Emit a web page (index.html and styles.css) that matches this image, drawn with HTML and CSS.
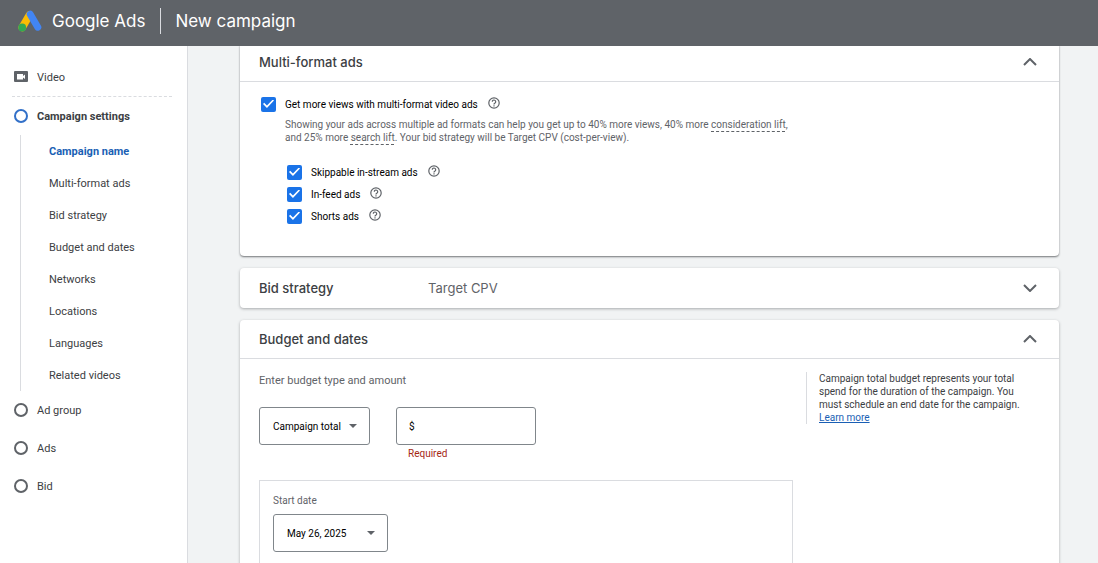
FILE: index.html
```html
<!DOCTYPE html>
<html lang="en">
<head>
    <meta charset="UTF-8">
    <meta name="viewport" content="width=device-width, initial-scale=1.0">
    <title>New campaign - Google Ads</title>
    <link rel="stylesheet" href="styles.css">
</head>
<body>
    <header class="topbar">
        <svg class="logo" viewBox="0 0 24 22" aria-hidden="true">
            <path d="M11.500 5 4.200 17.500" stroke="#fbbc04" stroke-width="7.500" stroke-linecap="round"/>
            <path d="M12.200 4.200 19.800 17.200" stroke="#4285f4" stroke-width="7" stroke-linecap="round"/>
            <circle cx="4.200" cy="17.500" r="3.900" fill="#34a853"/>
        </svg>
        <span class="brand">Google Ads</span>
        <h1 class="page-title">New campaign</h1>
    </header>

    <div class="layout">
        <nav class="sidebar">
            <a href="#" class="step step-type">
                <svg class="step-icon" viewBox="0 0 14 12" aria-hidden="true">
                    <rect width="14" height="11" rx="1" fill="#5f6368"/>
                    <path d="M3 3h6v2l2-1.500v4.500l-2-1.500v2H3z" fill="#fff"/>
                </svg>
                Video
            </a>
            <a href="#" class="step current"><span class="dot"></span>Campaign settings</a>
            <ul class="substeps">
                <li><a href="#" class="active">Campaign name</a></li>
                <li><a href="#">Multi-format ads</a></li>
                <li><a href="#">Bid strategy</a></li>
                <li><a href="#">Budget and dates</a></li>
                <li><a href="#">Networks</a></li>
                <li><a href="#">Locations</a></li>
                <li><a href="#">Languages</a></li>
                <li><a href="#">Related videos</a></li>
            </ul>
            <a href="#" class="step"><span class="dot"></span>Ad group</a>
            <a href="#" class="step"><span class="dot"></span>Ads</a>
            <a href="#" class="step"><span class="dot"></span>Bid</a>
        </nav>

        <main class="content">
            <section class="card card-formats">
                <div class="card-header">
                    <h2>Multi-format ads</h2>
                    <button class="toggle" aria-label="Collapse multi-format ads">
                        <svg viewBox="0 0 14 8"><path d="M1 7l6-6 6 6"/></svg>
                    </button>
                </div>
                <div class="formats">
                    <div class="check-row">
                        <input type="checkbox" id="multiFormat" checked>
                        <label for="multiFormat">Get more views with multi-format video ads</label>
                        <button class="help" aria-label="Help">
                            <svg viewBox="0 0 12 12"><circle cx="6" cy="6" r="5.200"/><path d="M4.300 4.800a1.700 1.700 0 1 1 2.700 1.300C6.300 6.500 6 6.800 6 7.400M6 8.300v1.100"/></svg>
                        </button>
                    </div>
                    <p class="description">
                        Showing your ads across multiple ad formats can help you get up to 40% more views, 40% more <span class="term">consideration lift</span>,
                        and 25% more <span class="term">search lift</span>. Your bid strategy will be Target CPV (cost-per-view).
                    </p>
                    <div class="format-list">
                        <div class="check-row">
                            <input type="checkbox" id="skippable" checked>
                            <label for="skippable">Skippable in-stream ads</label>
                            <button class="help" aria-label="Help">
                                <svg viewBox="0 0 12 12"><circle cx="6" cy="6" r="5.200"/><path d="M4.300 4.800a1.700 1.700 0 1 1 2.700 1.300C6.300 6.500 6 6.800 6 7.400M6 8.300v1.100"/></svg>
                            </button>
                        </div>
                        <div class="check-row">
                            <input type="checkbox" id="inFeed" checked>
                            <label for="inFeed">In-feed ads</label>
                            <button class="help" aria-label="Help">
                                <svg viewBox="0 0 12 12"><circle cx="6" cy="6" r="5.200"/><path d="M4.300 4.800a1.700 1.700 0 1 1 2.700 1.300C6.300 6.500 6 6.800 6 7.400M6 8.300v1.100"/></svg>
                            </button>
                        </div>
                        <div class="check-row">
                            <input type="checkbox" id="shorts" checked>
                            <label for="shorts">Shorts ads</label>
                            <button class="help" aria-label="Help">
                                <svg viewBox="0 0 12 12"><circle cx="6" cy="6" r="5.200"/><path d="M4.300 4.800a1.700 1.700 0 1 1 2.700 1.300C6.300 6.500 6 6.800 6 7.400M6 8.300v1.100"/></svg>
                            </button>
                        </div>
                    </div>
                </div>
            </section>

            <section class="card card-closed">
                <div class="card-header">
                    <h2>Bid strategy</h2>
                    <span class="summary">Target CPV</span>
                    <button class="toggle" aria-label="Expand bid strategy">
                        <svg viewBox="0 0 14 8"><path d="M1 1l6 6 6-6"/></svg>
                    </button>
                </div>
            </section>

            <section class="card">
                <div class="card-header">
                    <h2>Budget and dates</h2>
                    <button class="toggle" aria-label="Collapse budget and dates">
                        <svg viewBox="0 0 14 8"><path d="M1 7l6-6 6 6"/></svg>
                    </button>
                </div>
                <div class="budget">
                    <div class="budget-form">
                        <label for="budgetType" class="group-label">Enter budget type and amount</label>
                        <div class="budget-fields">
                            <select id="budgetType" class="select">
                                <option>Campaign total</option>
                                <option>Daily</option>
                            </select>
                            <div class="amount">
                                <div class="amount-box">
                                    <label for="amount">$</label>
                                    <input type="text" id="amount" required>
                                </div>
                                <p class="error">Required</p>
                            </div>
                        </div>
                        <div class="dates">
                            <label for="startDate">Start date</label>
                            <select id="startDate" class="select select-date">
                                <option>May 26, 2025</option>
                            </select>
                        </div>
                    </div>
                    <aside class="hint">
                        <p>Campaign total budget represents your total spend for the duration of the campaign. You must schedule an end date for the campaign. <a href="#">Learn more</a></p>
                    </aside>
                </div>
            </section>
        </main>
    </div>
</body>
</html>
```
FILE: styles.css
```css
* {
    box-sizing: border-box;
}
body {
    margin: 0;
    height: 100vh;
    display: flex;
    flex-direction: column;
    font-family: Roboto, Arial, sans-serif;
    font-size: 10px;
    line-height: 13px;
    color: #3c4043;
    background-color: #f1f3f4;
}
h1, h2, p, ul {
    margin: 0;
    padding: 0;
}
button {
    padding: 0;
    border: none;
    background: none;
    cursor: pointer;
}
svg {
    display: block;
    fill: none;
}

/* Top bar */
.topbar {
    flex: none;
    display: flex;
    align-items: center;
    height: 46px;
    padding: 0 18px 4px;
    color: #fff;
    background-color: #5f6368;
    z-index: 1;
}
.logo {
    width: 24px;
    height: 22px;
    margin-right: 10px;
}
.brand, .page-title {
    font-family: Inter, Roboto, sans-serif;
    font-size: 17px;
    line-height: 26px;
    font-weight: 400;
}
.page-title {
    margin-left: 15px;
    padding-left: 14px;
    border-left: 1px solid #dadce0;
}
.layout {
    flex: 1;
    display: flex;
    min-height: 0;
}

/* Sidebar */
.sidebar {
    flex: none;
    width: 188px;
    padding-top: 12px;
    font-size: 11px;
    background-color: #fff;
    border-right: 1px solid #dadce0;
}
.sidebar a {
    color: #3c4043;
    text-decoration: none;
}
.step {
    display: flex;
    align-items: center;
    gap: 9px;
    height: 38px;
    padding-left: 14px;
}
.step-type {
    height: 39px;
    margin: 0 15px 0 12px;
    padding-left: 2px;
    border-bottom: 1px dashed #dadce0;
}
.step-icon {
    width: 14px;
    height: 12px;
}
.dot {
    width: 14px;
    height: 14px;
    border: 2px solid #5f6368;
    border-radius: 50%;
}
.current {
    font-weight: 700;
}
.current .dot {
    border-color: #3270c8;
}
.substeps {
    margin-left: 20px;
    padding-left: 28px;
    list-style: none;
    border-left: 1px solid #dadce0;
}
.substeps a {
    display: block;
    padding-top: 1px;
    line-height: 31px;
}
.substeps .active {
    color: #1a5fb4;
    font-weight: 700;
}

/* Cards */
.content {
    flex: 1;
    min-width: 0;
    padding: 0 39px 0 52px;
    overflow-y: auto;
    scrollbar-width: none;
}
.card {
    margin-bottom: 12px;
    background-color: #fff;
    border-radius: 4px;
    box-shadow: 0 1px 3px rgba(60, 64, 67, 0.4);
}
.card-formats {
    margin-top: -3px;
    box-shadow: 0 1px 2px rgba(60, 64, 67, 0.7);
}
.card-header {
    display: flex;
    align-items: center;
    height: 39px;
    padding: 0 20px 0 19px;
    border-bottom: 1px solid #dadce0;
}
.card-closed .card-header {
    border-bottom: none;
}
.card-header h2, .summary {
    font-family: Inter, Roboto, sans-serif;
    font-size: 13px;
    line-height: 18px;
    font-weight: 500;
}
.card-closed {
    padding-bottom: 1px;
}
.card-closed h2 {
    width: 169px;
}
.card-header .summary {
    color: #5f6368;
    font-weight: 400;
}
.toggle {
    margin-left: auto;
    padding: 4px 2px;
}
.toggle svg {
    width: 14px;
    height: 8px;
    stroke: #5f6368;
    stroke-width: 2;
}

/* Multi-format ads */
.formats {
    padding: 11px 21px 29px;
}
.check-row {
    display: flex;
    align-items: center;
    height: 22px;
    color: #000;
}
.check-row input {
    appearance: none;
    display: grid;
    place-items: center;
    width: 15px;
    height: 15px;
    margin: 0 9px 0 0;
    background-color: #1a73e8;
    border-radius: 2px;
}
.check-row input:checked::after {
    content: "";
    width: 11px;
    height: 9px;
    background-color: #fff;
    clip-path: polygon(0 50%, 11% 37%, 36% 67%, 89% 0, 100% 12%, 36% 94%);
}
.help {
    margin: 0 0 2px 10px;
}
.help svg {
    width: 12px;
    height: 12px;
    stroke: #5f6368;
    stroke-width: 1.2;
}
.description {
    max-width: 540px;
    margin-top: 3px;
    padding-left: 24px;
    color: #5f6368;
}
.term {
    text-decoration: underline dashed 1px;
    text-underline-offset: 3px;
    text-decoration-skip-ink: none;
}
.format-list {
    margin-top: 17px;
    padding-left: 26px;
}

/* Budget and dates */
.budget {
    display: grid;
    grid-template-columns: minmax(0, 1fr) 253px;
    gap: 13px;
    padding: 13px 0 20px 19px;
}
.group-label {
    display: block;
    color: #5f6368;
    font-size: 11px;
    line-height: 18px;
}
.budget-fields {
    display: flex;
    gap: 26px;
    margin-top: 17px;
}
.select {
    appearance: none;
    width: 111px;
    height: 38px;
    padding: 0 13px;
    color: #000;
    font-family: inherit;
    font-size: 10px;
    border: 1px solid #80868b;
    border-radius: 3px;
    background: #fff url("data:image/svg+xml,%3Csvg xmlns='http://www.w3.org/2000/svg' width='8' height='4'%3E%3Cpath d='M0 0h8L4 4z' fill='%235f6368'/%3E%3C/svg%3E") no-repeat right 12px center;
}
.amount-box {
    display: flex;
    align-items: center;
    gap: 4px;
    width: 140px;
    height: 38px;
    padding: 0 12px;
    color: #000;
    border: 1px solid #80868b;
    border-radius: 3px;
}
.amount-box input {
    flex: 1;
    min-width: 0;
    padding: 0;
    font: inherit;
    border: none;
    outline: none;
}
.error {
    margin-top: 2px;
    padding-left: 12px;
    color: #a52714;
}
.dates {
    margin-top: 20px;
    padding: 13px;
    height: 160px;
    color: #5f6368;
    border: 1px solid #dadce0;
}
.dates label {
    display: block;
    margin-bottom: 7px;
}
.select-date {
    width: 115px;
}
.hint {
    align-self: start;
    padding: 0 34px 0 12px;
    border-left: 1px solid #dadce0;
}
.hint a {
    color: #1a5fb4;
}
```
